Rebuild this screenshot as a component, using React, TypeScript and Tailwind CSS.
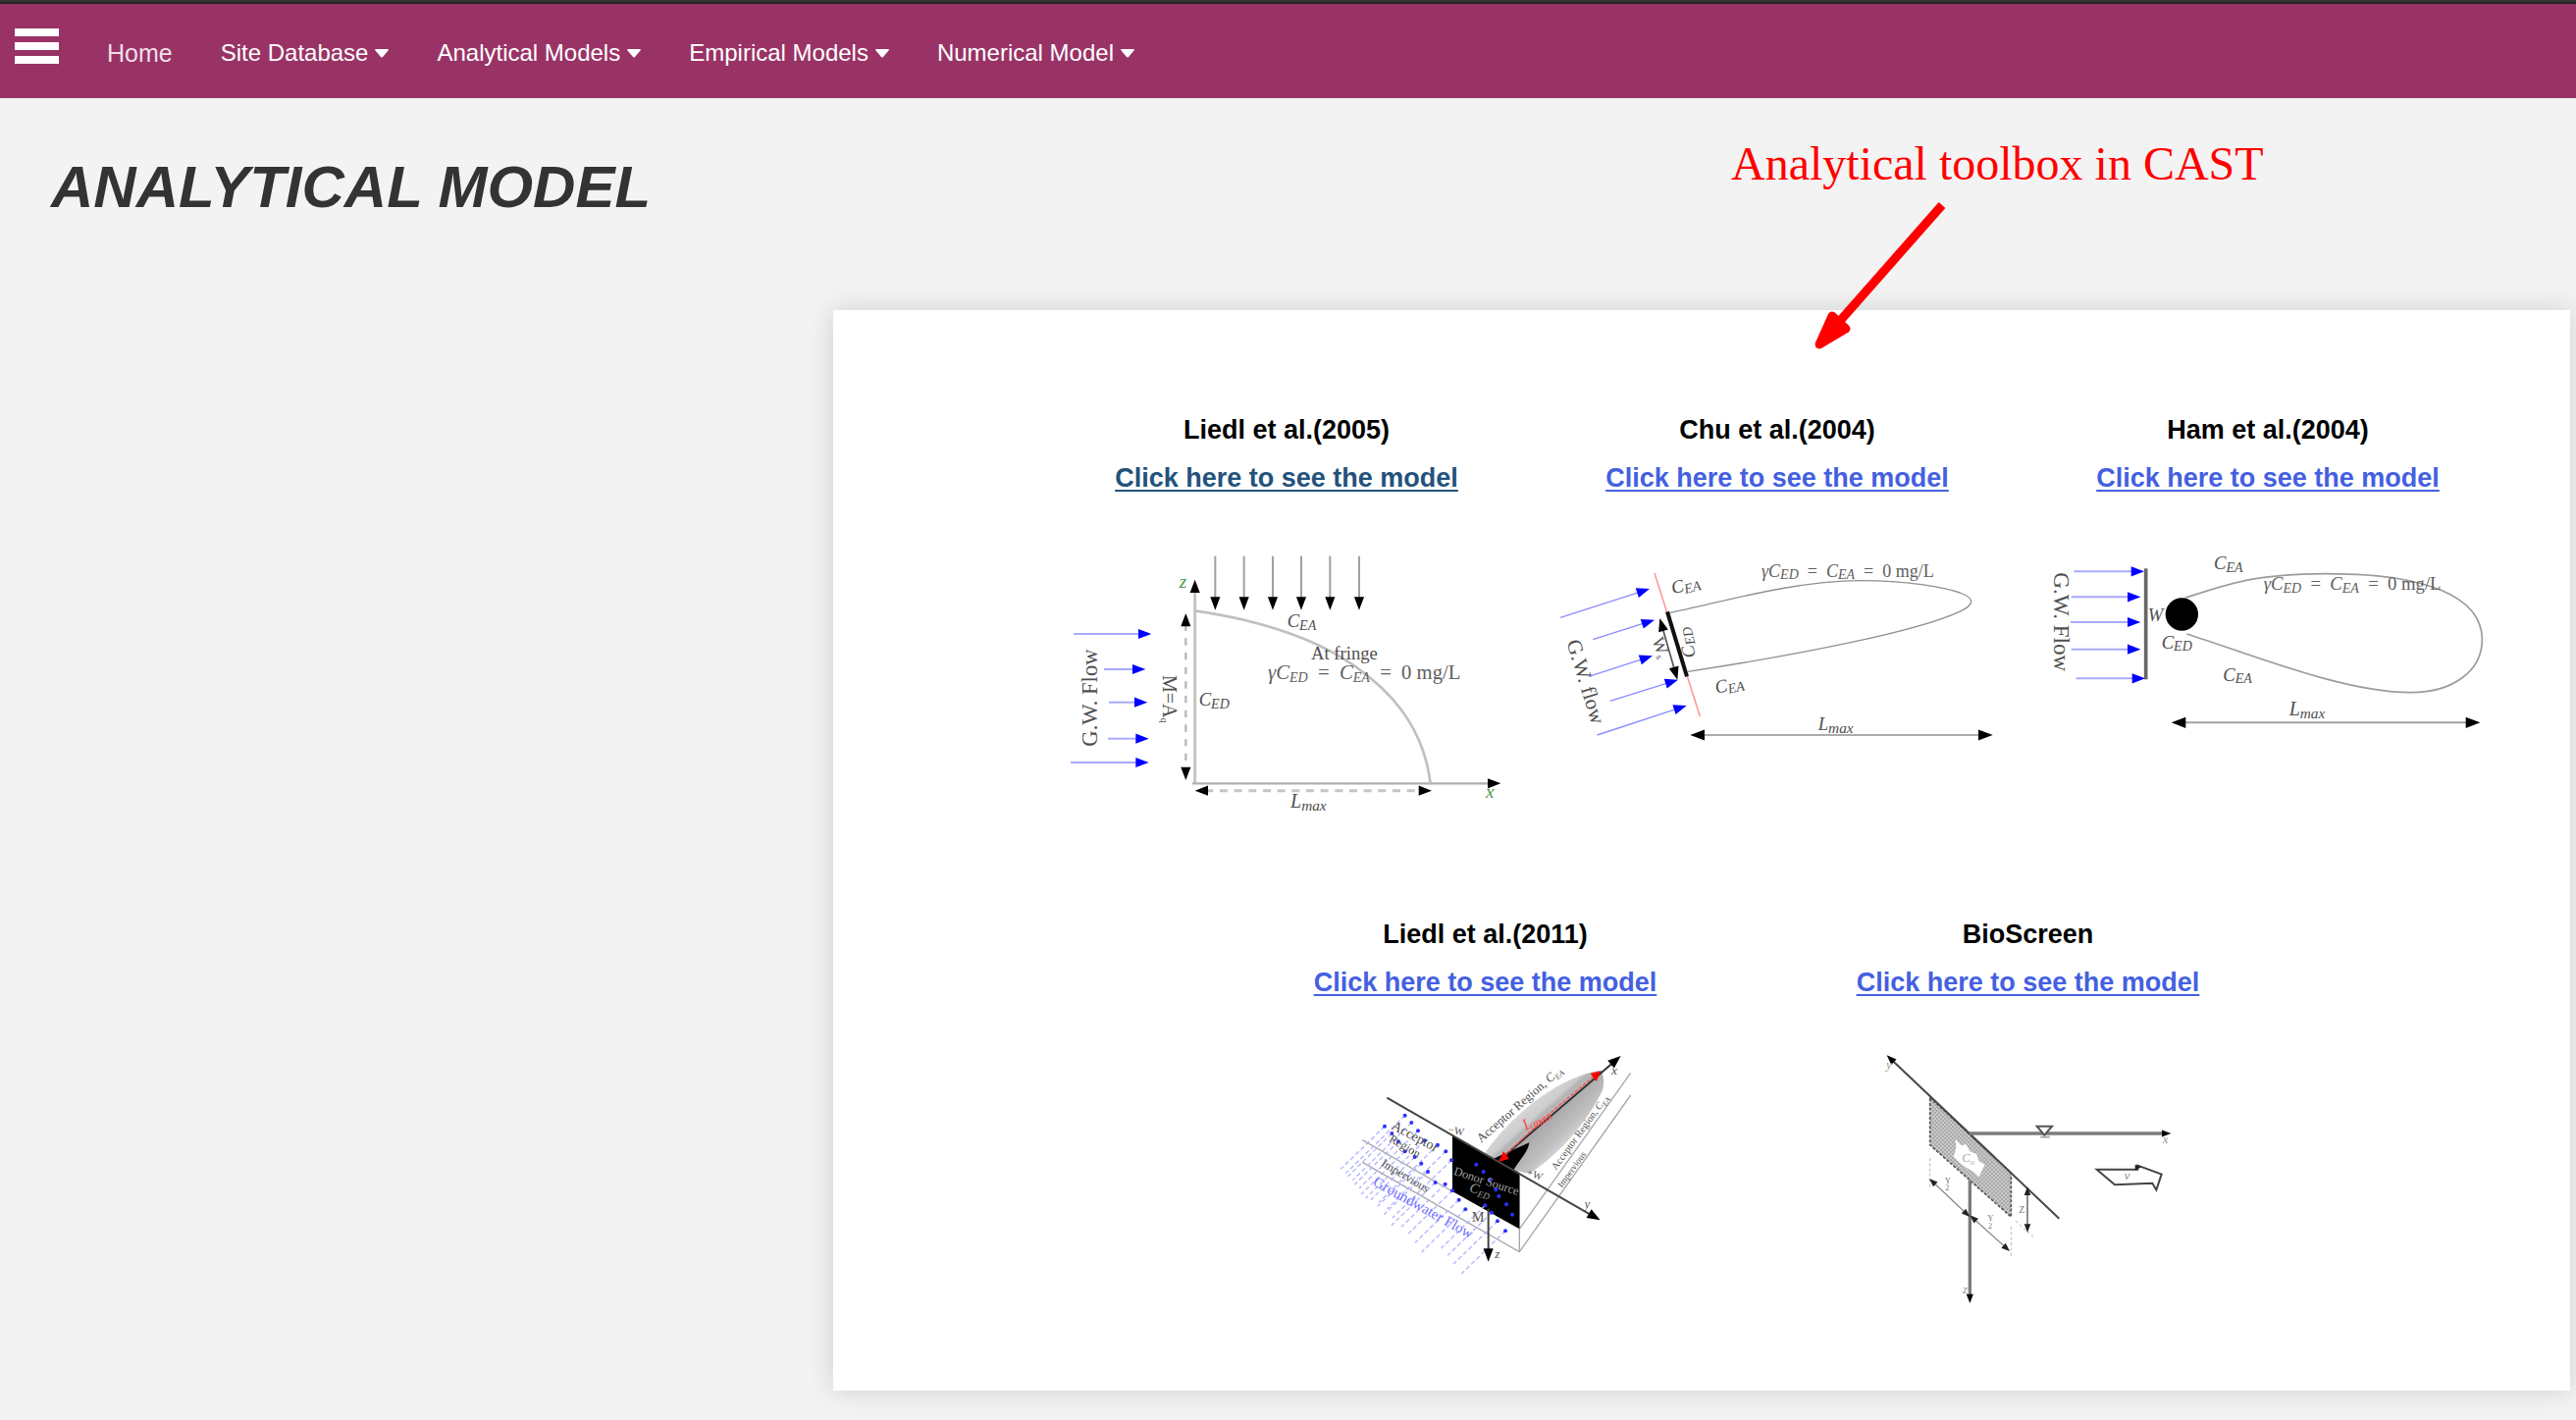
import React from "react";

type ArrowProps = {
  x1: number;
  y1: number;
  x2: number;
  y2: number;
  line?: string;
  head?: string;
  w?: number;
  size?: number;
  both?: boolean;
  dash?: string;
};

function headPoints(x: number, y: number, angle: number, size: number) {
  const half = size * 0.38;
  const bx = x - Math.cos(angle) * size;
  const by = y - Math.sin(angle) * size;
  const nx = -Math.sin(angle) * half;
  const ny = Math.cos(angle) * half;
  return `${x},${y} ${bx + nx},${by + ny} ${bx - nx},${by - ny}`;
}

function Arrow({ x1, y1, x2, y2, line = "#555", head = "#000", w = 5, size = 40, both, dash }: ArrowProps) {
  const a = Math.atan2(y2 - y1, x2 - x1);
  const cut = size * 0.8;
  return (
    <g>
      <line
        x1={both ? x1 + Math.cos(a) * cut : x1}
        y1={both ? y1 + Math.sin(a) * cut : y1}
        x2={x2 - Math.cos(a) * cut}
        y2={y2 - Math.sin(a) * cut}
        stroke={line}
        strokeWidth={w}
        strokeDasharray={dash}
      />
      <polygon points={headPoints(x2, y2, a, size)} fill={head} />
      {both && <polygon points={headPoints(x1, y1, a + Math.PI, size)} fill={head} />}
    </g>
  );
}

function Blue(props: ArrowProps) {
  return <Arrow line="#a9a9ff" head="#0000ff" w={6} {...props} />;
}

function Label({
  x,
  y,
  rotate = 0,
  size = 56,
  fill = "#505050",
  italic,
  children,
}: {
  x: number;
  y: number;
  rotate?: number;
  size?: number;
  fill?: string;
  italic?: boolean;
  children: React.ReactNode;
}) {
  return (
    <text
      transform={`translate(${x} ${y}) rotate(${rotate})`}
      fontSize={size}
      fill={fill}
      fontStyle={italic ? "italic" : "normal"}
    >
      {children}
    </text>
  );
}

function Sub({ base, sub, size = 42 }: { base: string; sub: string; size?: number }) {
  return (
    <>
      <tspan fontStyle="italic">{base}</tspan>
      <tspan fontStyle="italic" fontSize={size} dy={8}>
        {sub}
      </tspan>
    </>
  );
}

function Fringe({ x, y, size }: { x: number; y: number; size: number }) {
  return (
    <Label x={x} y={y} size={size} fill="#606060">
      <tspan fontStyle="italic">γ</tspan>
      <Sub base="C" sub="ED" />
      <tspan dy={-8}>{"\u2002=\u2002"}</tspan>
      <Sub base="C" sub="EA" />
      <tspan dy={-8}>{"\u2002=\u20020 mg/L"}</tspan>
    </Label>
  );
}

const serif = "font-['Liberation_Serif',serif]";

function Liedl2005() {
  return (
    <svg viewBox="-57 450 1500 900" className={`h-[300px] w-full ${serif}`} role="img" aria-label="Liedl et al. 2005 model">
      {[475, 563, 651, 738, 826, 915].map((x) => (
        <Arrow key={x} x1={x} y1={500} x2={x} y2={665} line="#a0a0a0" w={6} />
      ))}
      <Arrow x1={413} y1={1195} x2={413} y2={572} line="#c4c4c4" w={9} />
      <Arrow x1={405} y1={1195} x2={1348} y2={1195} line="#b0b0b0" w={7} />
      <Arrow x1={385} y1={675} x2={385} y2={1185} line="#b8b8b8" w={7} both dash="22 22" />
      <Arrow x1={413} y1={1217} x2={1137} y2={1217} line="#c4c4c4" w={9} both dash="24 20" />
      <path d="M413 667C640 700 800 765 900 835S1110 1010 1133 1195" fill="none" stroke="#c0c0c0" strokeWidth={8} />
      <Blue x1={42} y1={738} x2={280} y2={738} />
      <Blue x1={135} y1={846} x2={262} y2={846} />
      <Blue x1={150} y1={947} x2={268} y2={947} />
      <Blue x1={147} y1={1058} x2={272} y2={1058} />
      <Blue x1={33} y1={1131} x2={272} y2={1131} />
      <Label x={115} y={1082} rotate={-90} size={68}>G.W. Flow</Label>
      <Label x={315} y={864} rotate={90} size={60}>
        M=A<tspan fontSize={32} dy={6}>q</tspan>
      </Label>
      <Label x={695} y={717}><Sub base="C" sub="EA" /></Label>
      <Label x={425} y={957}><Sub base="C" sub="ED" /></Label>
      <Label x={768} y={815}>At fringe</Label>
      <Fringe x={636} y={877} size={62} />
      <Label x={705} y={1270} size={60}><Sub base="L" sub="max" size={46} /></Label>
      <Label x={365} y={598} fill="#4a9a4a" size={58} italic>z</Label>
      <Label x={1302} y={1240} fill="#4a9a4a" size={58} italic>x</Label>
    </svg>
  );
}

function Chu2004() {
  return (
    <svg viewBox="-27 450 1500 900" className={`h-[300px] w-full ${serif}`} role="img" aria-label="Chu et al. 2004 model">
      <path
        d="M392 674C560 640 760 577 980 575C1120 575 1230 595 1282 612C1330 630 1325 650 1280 670C1150 730 800 800 450 853"
        fill="none"
        stroke="#909090"
        strokeWidth={4}
      />
      <line x1={348} y1={552} x2={487} y2={990} stroke="#ff9c9c" strokeWidth={5} />
      <line x1={387} y1={670} x2={447} y2={868} stroke="#111" strokeWidth={12} />
      <Arrow x1={364} y1={690} x2={418} y2={878} both w={5} />
      <Blue x1={60} y1={688} x2={333} y2={600} w={4} line="#8c8cff" />
      <Blue x1={160} y1={755} x2={348} y2={695} w={4} line="#8c8cff" />
      <Blue x1={147} y1={868} x2={342} y2={805} w={4} line="#8c8cff" />
      <Blue x1={212} y1={943} x2={420} y2={878} w={4} line="#8c8cff" />
      <Blue x1={173} y1={1047} x2={446} y2={957} w={4} line="#8c8cff" />
      <Label x={79} y={763} rotate={73} size={64}>G.W. flow</Label>
      <Label x={340} y={756} rotate={70} size={54}>
        W<tspan fontSize={30} dy={6}>s</tspan>
      </Label>
      <Label x={404} y={616} rotate={-14}><Sub base="C" sub="EA" /></Label>
      <Label x={537} y={920} rotate={-12}><Sub base="C" sub="EA" /></Label>
      <Label x={474} y={806} rotate={-104}><Sub base="C" sub="ED" /></Label>
      <Fringe x={675} y={563} size={54} />
      <Label x={848} y={1032}><Sub base="L" sub="max" size={46} /></Label>
      <Arrow x1={457} y1={1047} x2={1382} y2={1047} both line="#909090" w={5} size={44} />
    </svg>
  );
}

function Ham2004() {
  return (
    <svg viewBox="-27 450 1500 900" className={`h-[300px] w-full ${serif}`} role="img" aria-label="Ham et al. 2004 model">
      <path
        d="M470 628C600 585 680 555 900 554C1100 555 1180 577 1250 603C1340 640 1378 690 1378 755C1378 850 1290 917 1160 917C960 917 700 810 475 738"
        fill="none"
        stroke="#9c9c9c"
        strokeWidth={5}
      />
      <Label x={356} y={698} italic>W</Label>
      <line x1={350} y1={538} x2={350} y2={877} stroke="#666" strokeWidth={11} />
      <circle cx={460} cy={678} r={50} />
      <Blue x1={130} y1={547} x2={345} y2={547} />
      <Blue x1={122} y1={625} x2={334} y2={625} />
      <Blue x1={120} y1={702} x2={334} y2={702} />
      <Blue x1={122} y1={785} x2={334} y2={785} />
      <Blue x1={137} y1={874} x2={348} y2={874} />
      <Label x={70} y={550} rotate={90} size={69}>G.W. Flow</Label>
      <Label x={558} y={540}><Sub base="C" sub="EA" /></Label>
      <Label x={398} y={782}><Sub base="C" sub="ED" /></Label>
      <Label x={586} y={881}><Sub base="C" sub="EA" /></Label>
      <Fringe x={710} y={604} size={56} />
      <Label x={788} y={987} size={60}><Sub base="L" sub="max" size={46} /></Label>
      <Arrow x1={428} y1={1009} x2={1372} y2={1009} both line="#a0a0a0" w={6} size={44} />
    </svg>
  );
}

const upperDots = [
  [335, 650], [355, 672], [375, 697], [395, 727], [435, 740], [460, 760], [477, 787],
];
const lowerDots = [
  [273, 683], [295, 705], [315, 730], [335, 760], [365, 777], [385, 797], [405, 822], [428, 855], [458, 860],
  [480, 880], [500, 908], [520, 937], [580, 925], [600, 947], [618, 973], [642, 1003],
];
const sourceDots = [
  [553, 800], [575, 822], [595, 848], [613, 877], [622, 897], [645, 922], [663, 953],
];

function Liedl2011() {
  return (
    <svg viewBox="-18 432 1200 840" className={`h-[280px] w-[400px] ${serif}`} role="img" aria-label="Liedl et al. 2011 model">
      <defs>
        <linearGradient id="plumeUpper" gradientUnits="userSpaceOnUse" x1="700" y1="600" x2="780" y2="690">
          <stop offset="0" stopColor="#dcdcdc" />
          <stop offset="0.5" stopColor="#cdcdcd" />
          <stop offset="0.6" stopColor="#b4b4b4" />
          <stop offset="1" stopColor="#c4c4c4" />
        </linearGradient>
        <linearGradient id="plumeLower" gradientUnits="userSpaceOnUse" x1="790" y1="650" x2="860" y2="720">
          <stop offset="0" stopColor="#ababab" />
          <stop offset="0.6" stopColor="#c0c0c0" />
          <stop offset="1" stopColor="#dcdcdc" />
        </linearGradient>
      </defs>
      <g stroke="#a8a8a8" strokeWidth={4} fill="none">
        <path d="M205 725L480 882" />
        <path d="M205 793L685 1067L1025 588" />
        <path d="M685 997L1025 520" />
        <path d="M685 825V1067" />
      </g>
      <path d="M580 765C650 660 800 530 935 512L620 790Z" fill="url(#plumeUpper)" />
      <path d="M935 512C950 550 940 575 930 590C880 690 790 780 715 828L660 815L620 790Z" fill="url(#plumeLower)" />
      <polygon points="480,712 685,825 685,997 480,882" fill="#000" />
      <path d="M600 785L715 733C712 760 690 780 668 815Z" fill="#000" />
      {upperDots.map(([x, y]) => (
        <line key={`${x}-${y}`} x1={x} y1={y} x2={x - 180} y2={y + 176} stroke="#b4b4ff" strokeWidth={4} strokeDasharray="14 8" />
      ))}
      {lowerDots.map(([x, y]) => (
        <line key={`${x}-${y}`} x1={x} y1={y} x2={x - 134} y2={y + 131} stroke="#b4b4ff" strokeWidth={4} strokeDasharray="14 8" />
      ))}
      <Arrow x1={280} y1={596} x2={932} y2={970} line="#444" w={6} />
      <Arrow x1={620} y1={790} x2={995} y2={468} line="#333" w={6} />
      <Arrow x1={590} y1={935} x2={590} y2={1097} line="#444" w={6} />
      <path d="M640 772L765 655L910 532" stroke="#ff5050" strokeWidth={4} strokeDasharray="12 4" fill="none" />
      <polygon points="622,792 654,782 636,760" fill="#ff0000" />
      <polygon points="934,514 902,522 920,546" fill="#ff0000" />
      {[...upperDots, ...lowerDots, ...sourceDots].map(([x, y]) => (
        <circle key={`${x}-${y}`} cx={x} cy={y} r={6} fill="#3030ff" />
      ))}
      <Label x={705} y={697} rotate={-30} fill="#ff4d4d" size={50}><Sub base="L" sub="max" size={38} /></Label>
      <Label x={292} y={690} rotate={28} size={42}>Acceptor</Label>
      <Label x={284} y={728} rotate={30} size={36}>Region</Label>
      <Label x={260} y={802} rotate={31} size={36}>Impervious</Label>
      <Label x={235} y={862} rotate={29} size={45} fill="#7070ff">Groundwater Flow</Label>
      <Label x={568} y={734} rotate={-41} size={38}>Acceptor Region, <Sub base="C" sub="EA" size={24} /></Label>
      <Label x={797} y={818} rotate={-54} size={31}>Acceptor Region, <Sub base="C" sub="EA" size={22} /></Label>
      <Label x={815} y={872} rotate={-54} size={28}>Impervious</Label>
      <Label x={482} y={830} rotate={18} size={37} fill="#a0a0a0">Donor Source</Label>
      <Label x={530} y={882} rotate={16} size={42} fill="#a0a0a0"><Sub base="C" sub="ED" size={28} /></Label>
      <Label x={466} y={702} rotate={12} size={32}>−W</Label>
      <Label x={706} y={832} rotate={20} size={32}>+W</Label>
      <Label x={540} y={975} size={42}>M</Label>
      <Label x={966} y={526} size={40} italic>x</Label>
      <Label x={884} y={932} size={36} italic>y</Label>
      <Label x={610} y={1087} size={40} italic>z</Label>
    </svg>
  );
}

function BioScreen() {
  return (
    <svg viewBox="-9 432 1200 840" className={`h-[280px] w-[400px] ${serif}`} role="img" aria-label="BioScreen model">
      <defs>
        <pattern id="hatch" width="12" height="12" patternUnits="userSpaceOnUse">
          <rect width="12" height="12" fill="#c9c9c9" />
          <path d="M0 0L12 12M12 0L0 12" stroke="#9a9a9a" strokeWidth={2} />
        </pattern>
      </defs>
      <polygon points="290,595 538,825 538,960 290,740" fill="url(#hatch)" stroke="#555" strokeWidth={5} strokeDasharray="9 5" />
      <path
        d="M368 722L385 742L400 738L412 760L432 768L440 790L458 800L448 820L440 838L420 820L405 812L388 800L362 776L370 750Z"
        fill="#fff"
      />
      <Label x={388} y={792} size={38} fill="#aaa"><Sub base="C" sub="o" size={26} /></Label>
      <Arrow x1={685} y1={965} x2={158} y2={466} line="#484848" w={6} size={30} />
      <Arrow x1={410} y1={705} x2={1027} y2={705} line="#7c7c7c" w={10} size={28} />
      <Arrow x1={412} y1={848} x2={412} y2={1224} line="#7c7c7c" w={10} size={28} />
      <path d="M617 683H663L640 710Z" fill="#fff" stroke="#555" strokeWidth={6} />
      <path d="M628 716H656" stroke="#aaa" strokeWidth={6} />
      <g stroke="#b8b8b8" strokeWidth={3} strokeDasharray="9 7">
        <path d="M290 780V870" />
        <path d="M538 990V1085" />
        <path d="M552 973L607 1022" />
      </g>
      <Arrow x1={288} y1={843} x2={412} y2={960} both line="#8c8c8c" w={4} size={26} head="#222" />
      <Arrow x1={412} y1={955} x2={534} y2={1065} both line="#8c8c8c" w={4} size={26} head="#222" />
      <Arrow x1={588} y1={868} x2={588} y2={1008} both line="#777" w={5} size={26} head="#222" />
      <path d="M800 815H925V803L998 830L982 878L970 857L855 862Z" fill="none" stroke="#444" strokeWidth={6} />
      <path d="M917 800L936 808L917 818Z" fill="#222" />
      <Label x={884} y={846} size={38} fill="#888" italic>v</Label>
      <Label x={335} y={858} size={26} fill="#777">Y</Label>
      <Label x={337} y={880} size={24} fill="#777">2</Label>
      <Label x={466} y={972} size={26} fill="#777">Y</Label>
      <Label x={468} y={995} size={24} fill="#777">2</Label>
      <Label x={562} y={948} size={30} fill="#777">Z</Label>
      <Label x={156} y={508} size={38} fill="#999" italic>y</Label>
      <Label x={1001} y={736} size={38} fill="#999" italic>x</Label>
      <Label x={390} y={1194} size={38} fill="#999" italic>z</Label>
    </svg>
  );
}

function ModelCard({ title, visited, children }: { title: string; visited?: boolean; children: React.ReactNode }) {
  return (
    <article className="flex flex-col items-center text-[27px] leading-[49px] font-bold">
      <h2 className="text-black">{title}</h2>
      <a
        href="#"
        className={
          visited
            ? "text-[#23527c] underline decoration-2 underline-offset-[3px]"
            : "text-[#4460e0] underline decoration-2 underline-offset-[3px]"
        }
      >
        Click here to see the model
      </a>
      <div className="mt-[38px] flex w-full justify-center font-normal">{children}</div>
    </article>
  );
}

const menus = ["Site Database", "Analytical Models", "Empirical Models", "Numerical Model"];

export default function App() {
  return (
    <div className="min-h-screen bg-[#f3f3f3] font-['Liberation_Sans',Arial,sans-serif]">
      <header className="border-t-2 border-[#363636] bg-[#993366]">
        <div className="flex h-[98px] items-start border-t-2 border-[#222] pl-[15px] text-white">
          <button type="button" aria-label="Open menu" className="mt-[25px] flex w-[45px] flex-col gap-[6px]">
            <span className="h-2 w-full bg-white" />
            <span className="h-2 w-full bg-white" />
            <span className="h-2 w-full bg-white" />
          </button>
          <nav className="mt-[34px] ml-[49px] flex items-center gap-[49px] text-[24px] leading-8">
            <a href="#" className="text-[25px] text-[#f0dfe7]">
              Home
            </a>
            {menus.map((label) => (
              <button key={label} type="button" className="flex items-center gap-[7px]">
                {label}
                <svg viewBox="0 0 14 9" className="h-[9px] w-[14px]" fill="currentColor" aria-hidden="true">
                  <path d="M1 0H13Q14.500 0 13.500 1.500L8 8Q7 9 6 8L.5 1.500Q-.5 0 1 0Z" />
                </svg>
              </button>
            ))}
          </nav>
        </div>
      </header>

      <main className="relative pt-[55px] pb-[30px]">
        <h1 className="pl-[52px] text-[60px] leading-[72px] font-bold text-[#333] italic">ANALYTICAL MODEL</h1>

        <div className="mt-[89px] grid grid-cols-[849fr_1770fr] pr-[6px]">
          <section className="col-start-2 bg-white pt-[98px] pb-[73px] shadow-[0_0_26px_rgba(0,0,0,0.15)]">
            <div className="grid grid-cols-3 pr-[58px] pl-[212px]">
              <ModelCard title="Liedl et al.(2005)" visited>
                <Liedl2005 />
              </ModelCard>
              <ModelCard title="Chu et al.(2004)">
                <Chu2004 />
              </ModelCard>
              <ModelCard title="Ham et al.(2004)">
                <Ham2004 />
              </ModelCard>
            </div>
            <div className="mt-[78px] grid grid-cols-2 pr-[276px] pl-[388px]">
              <ModelCard title="Liedl et al.(2011)">
                <Liedl2011 />
              </ModelCard>
              <ModelCard title="BioScreen">
                <BioScreen />
              </ModelCard>
            </div>
          </section>
        </div>

        <div className="absolute top-[39px] left-[67.2%] text-[#ff0000]">
          <p className="font-['Liberation_Serif',serif] text-[48px] leading-[56px] whitespace-nowrap">
            Analytical toolbox in CAST
          </p>
          <svg viewBox="0 2 160 170" className="ml-[76px] h-[170px] w-[160px]" aria-hidden="true">
            <path d="M139 16L35 134" stroke="currentColor" strokeWidth={9} />
            <path
              d="M14 158L27 129L41 142Z"
              fill="currentColor"
              stroke="currentColor"
              strokeWidth={9}
              strokeLinejoin="round"
            />
          </svg>
        </div>
      </main>
    </div>
  );
}
